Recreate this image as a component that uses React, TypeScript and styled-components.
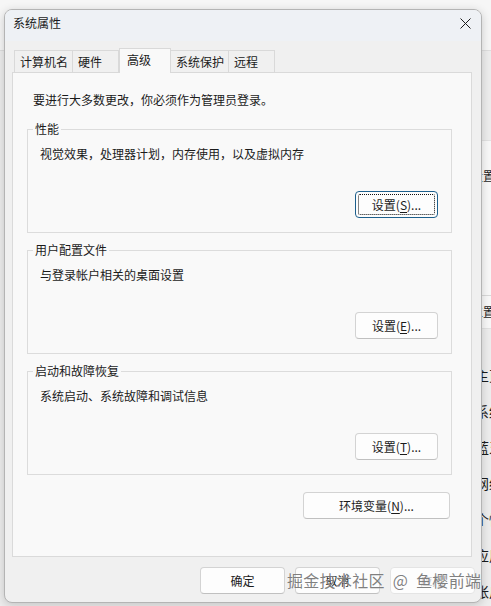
import React from "react";
import styled, { createGlobalStyle, css } from "styled-components";

const Global = createGlobalStyle`
  html, body {
    margin: 0;
    padding: 0;
  }
  body {
    width: 491px;
    height: 606px;
    overflow: hidden;
    background: #f5f5f5;
    font-family: "Noto Sans CJK SC", "Noto Sans", sans-serif;
    color: #1b1b1b;
  }
`;

const Desktop = styled.div`
  position: relative;
  width: 491px;
  height: 606px;
  overflow: hidden;
  background: #f6f6f6;
`;

/* Settings app window sitting behind the dialog */
const SettingsWindow = styled.div`
  position: absolute;
  left: 0;
  top: 50px;
  width: 700px;
  height: 600px;
  box-sizing: border-box;
  background: #ededed;
  border-top: 1px solid #dedede;
  padding: 89px 0 0 470px;
  display: flex;
  flex-direction: column;
`;

const SettingsCard = styled.div`
  width: 200px;
  background: #f8f8f8;
  border: 1px solid #e2e2e2;
  display: flex;
  flex-direction: column;
`;

const CardRow = styled.div<{ $h: number; $pad: number }>`
  height: ${(p) => p.$h}px;
  box-sizing: border-box;
  padding-top: ${(p) => p.$pad}px;
  font-size: 12px;
  line-height: 18px;
  & + & {
    border-top: 1px solid #d9d9d9;
  }
`;

const NavList = styled.div`
  display: flex;
  flex-direction: column;
  margin-top: 28px;
  padding-left: 5px;
`;

const NavItem = styled.div`
  height: 36px;
  font-size: 14px;
  line-height: 36px;
  color: #1b1b1b;
`;

/* System properties dialog */
const Dialog = styled.div`
  position: absolute;
  left: 4px;
  top: 9px;
  width: 478px;
  height: 594px;
  box-sizing: border-box;
  border: 1px solid #b4b4b4;
  border-radius: 8px;
  background: #f0f0f0;
  box-shadow: 0 2px 10px rgba(0, 0, 0, 0.18);
  overflow: hidden;
  display: flex;
  flex-direction: column;
`;

const TitleBar = styled.div`
  height: 31px;
  flex: none;
  display: flex;
  align-items: flex-start;
  justify-content: space-between;
  background: #eef1f5;
  padding: 0 10px 0 8px;
`;

const Title = styled.div`
  font-size: 12px;
  line-height: 26px;
  color: #1b1b1b;
`;

const CloseButton = styled.div`
  width: 12px;
  height: 12px;
  margin-top: 7px;
  display: flex;
  align-items: center;
  justify-content: center;
`;

const Body = styled.div`
  flex: 1;
  display: flex;
  flex-direction: column;
  padding: 7px 9px 0 7px;
`;

const TabRow = styled.div`
  display: flex;
  align-items: flex-end;
  height: 25px;
  padding-left: 2px;
  margin-bottom: -1px;
  position: relative;
  z-index: 1;
`;

const Tab = styled.div<{ $w: number; $active?: boolean }>`
  width: ${(p) => p.$w}px;
  box-sizing: border-box;
  height: 23px;
  border: 1px solid #d9d9d9;
  margin-left: -1px;
  padding: 2px 0 0 5px;
  font-size: 12px;
  line-height: 18px;
  background: #f0f0f0;
  color: #1b1b1b;
  white-space: nowrap;
  &:first-child {
    margin-left: 0;
  }
  ${(p) =>
    p.$active &&
    css`
      height: 25px;
      margin-left: 0;
      padding-left: 7px;
      background: #f9f9f9;
      border-bottom: none;
      position: relative;
      z-index: 2;
    `}
`;

const Panel = styled.div`
  height: 485px;
  box-sizing: border-box;
  border: 1px solid #dadada;
  background: #f9f9f9;
  padding: 18px 0 0 14px;
  display: flex;
  flex-direction: column;
`;

const Intro = styled.div`
  font-size: 12px;
  line-height: 18px;
  padding-left: 6px;
`;

const Group = styled.fieldset<{ $mt: number }>`
  margin: ${(p) => p.$mt}px 0 0 0;
  padding: 0;
  width: 425px;
  box-sizing: border-box;
  min-width: 0;
  border: 1px solid #dcdcdc;
`;

const GroupLabel = styled.legend`
  margin-left: 5px;
  padding: 0 2px;
  font-size: 12px;
  line-height: 18px;
  color: #1b1b1b;
`;

const GroupBody = styled.div`
  display: flex;
  flex-direction: column;
  padding: 7px 13px 14px 12px;
`;

const Description = styled.div`
  font-size: 12px;
  line-height: 18px;
`;

const ButtonRow = styled.div<{ $mt?: number; $pr?: number }>`
  display: flex;
  justify-content: flex-end;
  margin-top: ${(p) => p.$mt ?? 0}px;
  padding-right: ${(p) => p.$pr ?? 0}px;
`;

const Button = styled.button<{ $w: number; $focused?: boolean; $disabled?: boolean }>`
  position: relative;
  width: ${(p) => p.$w}px;
  height: 27px;
  box-sizing: border-box;
  padding: 0;
  border: 1px solid #d3d3d3;
  border-bottom-color: #c0c0c0;
  border-radius: 4px;
  background: #fdfdfd;
  font-family: "Noto Sans CJK SC", "Noto Sans", sans-serif;
  font-size: 12px;
  line-height: 18px;
  color: ${(p) => (p.$disabled ? "#c8c8c8" : "#1b1b1b")};
  u {
    text-decoration-thickness: 1px;
    text-underline-offset: 2px;
  }
  ${(p) =>
    p.$disabled &&
    css`
      border-color: #e4e4e4;
    `}
  ${(p) =>
    p.$focused &&
    css`
      border-color: #1d5f8c;
      &::after {
        content: "";
        position: absolute;
        inset: 2px;
        border: 1px dotted #111;
        border-radius: 2px;
      }
    `}
`;

const Footer = styled.div`
  display: flex;
  justify-content: flex-end;
  gap: 10px;
  padding-top: 10px;
  margin-right: -3px;
`;

const Watermark = styled.div`
  position: absolute;
  left: 287px;
  top: 569px;
  font-family: "Noto Sans CJK SC", sans-serif;
  font-size: 16px;
  line-height: 22px;
  color: rgba(105, 105, 105, 0.85);
  white-space: nowrap;
  letter-spacing: 0.3px;
  text-shadow: 0 0 1px rgba(255, 255, 255, 0.8);
  pointer-events: none;
`;

const Gap = styled.span`
  display: inline-block;
  width: 4px;
`;

const groups = [
  { title: "性能", desc: "视觉效果，处理器计划，内存使用，以及虚拟内存", key: "S", focused: true, mt: 11 },
  { title: "用户配置文件", desc: "与登录帐户相关的桌面设置", key: "E", mt: 8 },
  { title: "启动和故障恢复", desc: "系统启动、系统故障和调试信息", key: "T", mt: 8 },
];

const tabs = [
  { label: "计算机名", w: 59 },
  { label: "硬件", w: 47 },
  { label: "高级", w: 52, active: true },
  { label: "系统保护", w: 59 },
  { label: "远程", w: 47 },
];

const navItems = ["主页", "系统", "蓝牙和其他设备", "网络和 Internet", "个性化", "应用", "帐户"];

export default function App() {
  return (
    <Desktop>
      <Global />
      <SettingsWindow>
        <SettingsCard>
          <CardRow $h={154} $pad={26}>设置</CardRow>
          <CardRow $h={33} $pad={7}>位置</CardRow>
        </SettingsCard>
        <NavList>
          {navItems.map((n) => (
            <NavItem key={n}>{n}</NavItem>
          ))}
        </NavList>
      </SettingsWindow>

      <Dialog>
        <TitleBar>
          <Title>系统属性</Title>
          <CloseButton>
            <svg width="11" height="11" viewBox="0 0 11 11">
              <path d="M0.5 0.5 L10.5 10.5 M10.5 0.5 L0.5 10.5" stroke="#1b1b1b" strokeWidth="1" />
            </svg>
          </CloseButton>
        </TitleBar>
        <Body>
          <TabRow>
            {tabs.map((t) => (
              <Tab key={t.label} $w={t.w} $active={t.active}>
                {t.label}
              </Tab>
            ))}
          </TabRow>
          <Panel>
            <Intro>要进行大多数更改，你必须作为管理员登录。</Intro>
            {groups.map((g) => (
              <Group key={g.title} $mt={g.mt}>
                <GroupLabel>{g.title}</GroupLabel>
                <GroupBody>
                  <Description>{g.desc}</Description>
                  <ButtonRow $mt={28}>
                    <Button $w={83} $focused={g.focused}>
                      设置(<u>{g.key}</u>)...
                    </Button>
                  </ButtonRow>
                </GroupBody>
              </Group>
            ))}
            <ButtonRow $mt={17} $pr={21}>
              <Button $w={147}>
                环境变量(<u>N</u>)...
              </Button>
            </ButtonRow>
          </Panel>
          <Footer>
            <Button $w={85}>确定</Button>
            <Button $w={85}>取消</Button>
            <Button $w={85} $disabled>
              应用
            </Button>
          </Footer>
        </Body>
      </Dialog>

      <Watermark>
        掘金技术社区<Gap /> @ <Gap />鱼樱前端
      </Watermark>
    </Desktop>
  );
}
